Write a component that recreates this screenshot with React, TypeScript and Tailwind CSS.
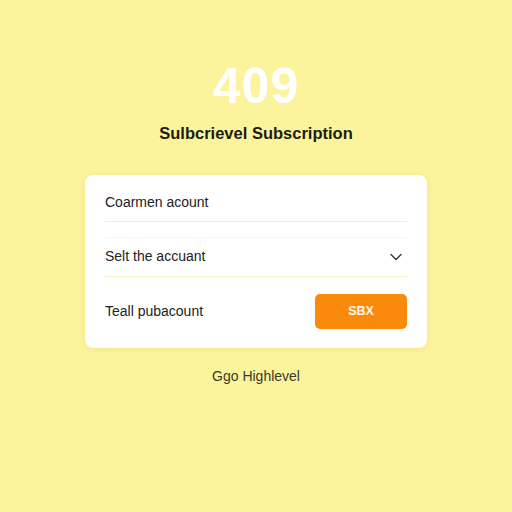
import { ChevronDown } from "lucide-react";

export default function App() {
  return (
    <div
      className="w-[512px] h-[512px] bg-[#fcf49c] flex flex-col items-center overflow-hidden"
      style={{ fontFamily: '"Liberation Sans", Arial, sans-serif' }}
    >
      <h1 className="mt-[61px] text-[50px] leading-none font-bold text-white tracking-[0.02em]">409</h1>
      <h2 className="mt-[10px] text-[16.5px] font-bold text-[#1c1c14]">Sulbcrievel Subscription</h2>

      <div className="mt-[29px] w-[342px] bg-white rounded-lg shadow-[0_1px_6px_rgba(180,160,60,0.18)] px-[20px] pt-[15px] pb-[19px]">
        {/* row 1 */}
        <div className="h-[26px] flex items-center text-[14px] text-[#222]">Coarmen acount</div>
        <div className="h-px bg-[#f3efc4] mt-[5px]" />
        <div className="h-px bg-[#f8f6dc] mt-[15px]" />
        {/* row 2 */}
        <div className="h-[38px] flex items-center justify-between text-[14px] text-[#222]">
          <span>Selt the accuant</span>
          <ChevronDown size={20} strokeWidth={1.5} className="text-[#333] mr-[1px]" />
        </div>
        <div className="h-px bg-[#f3efc4]" />
        {/* row 3 */}
        <div className="mt-[17px] flex items-center justify-between text-[14px] text-[#222]">
          <span>Teall pubacount</span>
          <button className="w-[92px] h-[35px] rounded-[5px] bg-[#fa8a0c] text-[#fff7e8] text-[12.5px] font-bold">
            SBX
          </button>
        </div>
      </div>

      <p className="mt-[18px] text-[14px] text-[#3a3a24]">Ggo Highlevel</p>
    </div>
  );
}
